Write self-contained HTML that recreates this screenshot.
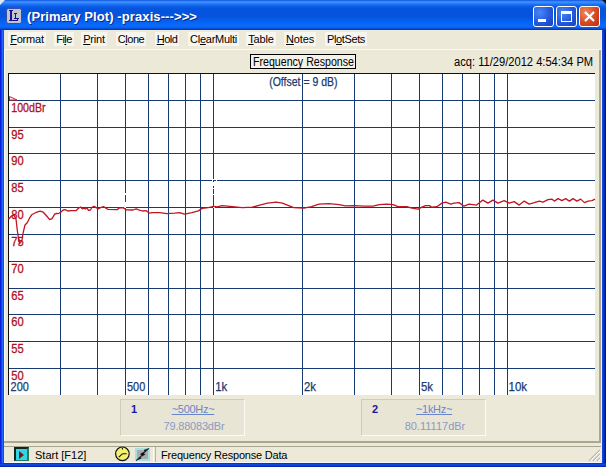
<!DOCTYPE html>
<html><head><meta charset="utf-8"><title>(Primary Plot) -praxis---&gt;&gt;&gt;</title>
<style>
html,body{margin:0;padding:0;}
body{width:606px;height:467px;overflow:hidden;position:relative;background:#ece9d8;font-family:"Liberation Sans",sans-serif;}
.abs{position:absolute;}
#frame{left:0;top:0;width:606px;height:467px;background:linear-gradient(to right,#0a20d8 0,#0a20d8 1px,#1040e8 1px,#1040e8 2px,#2068ff 2px,#2068ff 3px,#1050d0 3px,#1050d0 4px,#0a50e4 4px,#0a50e4 602px,#1446dc 602px,#1446dc 603px,#0838e0 603px,#0838e0 604px,#0828b8 604px,#0828b8 605px,#001890 605px);}
#fbot{left:0;top:463px;width:606px;height:4px;background:linear-gradient(to bottom,#0c34c4 0,#0c34c4 1px,#1048e0 1px,#1048e0 2px,#0c3cd0 2px,#0c3cd0 3px,#0828b8 3px);}
#client{left:4px;top:30px;width:598px;height:433px;background:#ece9d8;}
#title{left:0;top:0;width:606px;height:30px;background:linear-gradient(to bottom,#0a4fd4 0%,#2f85ff 4%,#3a8cff 8%,#1f74f4 14%,#0a5ce6 22%,#0454de 30%,#0454de 55%,#0660f0 70%,#086afc 84%,#0868f8 90%,#0850d8 95%,#0838b4 98%,#0838b0 100%);}
#ttext{left:27px;top:9px;color:#fff;font-weight:bold;font-size:13px;line-height:16px;white-space:nowrap;letter-spacing:0.1px;text-shadow:1px 1px 0 #0a2a90;}
.mi{top:32px;height:14px;background:#f6f5ef;font-size:11px;line-height:14px;color:#000;white-space:nowrap;text-align:center;}
.mi u{text-decoration:underline;}
.tb{top:6px;width:21px;height:21px;border-radius:3px;box-sizing:border-box;border:1px solid #fff;}
.blue{background:radial-gradient(circle at 30% 30%,#4a86f4 0%,#2458dc 55%,#1a3fb8 100%);}
.red{background:radial-gradient(circle at 30% 30%,#f08a60 0%,#d84820 55%,#b83010 100%);}
.plot{position:absolute;left:0;top:0;}
.plot text{font-family:"Liberation Sans",sans-serif;font-size:12px;}
.db{fill:#b01020;stroke:#b01020;stroke-width:0.3px;}
.hz{fill:#183a70;stroke:#183a70;stroke-width:0.25px;}
#fr{left:250px;top:54px;width:106px;height:15px;box-sizing:border-box;border:1px solid #000;background:#f3f1e8;font-size:11px;line-height:13px;letter-spacing:-0.25px;text-align:center;color:#000;white-space:nowrap;}
#acq{left:440px;top:55px;width:153px;text-align:right;font-size:11px;line-height:14px;color:#000;white-space:nowrap;}
.mk{top:399px;width:125px;height:37px;box-sizing:border-box;border:1px solid;border-color:#cfccbd #fbfaf5 #fbfaf5 #cfccbd;background:#e9e5d4;}
.mk b{position:absolute;left:10px;top:3px;font-size:11px;line-height:12px;color:#1a1a9c;}
.mk .f{letter-spacing:-0.3px;position:absolute;left:22px;width:100px;top:3px;text-align:center;font-size:11px;line-height:13px;color:#6a86c8;text-decoration:underline;white-space:nowrap;}
.mk .v{position:absolute;left:23px;width:100px;top:20px;text-align:center;font-size:11px;line-height:13px;color:#8a9ac4;white-space:nowrap;letter-spacing:-0.2px;}
.sx{font-size:12px;line-height:14px;color:#000;white-space:nowrap;transform-origin:0 0;}
.st{font-size:11px;line-height:13px;color:#000;white-space:nowrap;}
</style></head><body>
<div id="frame" class="abs"></div>
<div id="fbot" class="abs"></div>
<div id="title" class="abs"></div>
<div class="abs" style="left:0;top:0;width:0;height:0;border-top:5px solid #dfe6f4;border-right:5px solid transparent;"></div>
<div class="abs" style="right:0;top:0;width:0;height:0;border-top:4px solid #101010;border-left:4px solid transparent;"></div>
<svg class="abs" style="left:6px;top:8px" width="16" height="16" viewBox="0 0 16 16"><rect x="0.5" y="0.5" width="15" height="15" rx="2" fill="#c4c4d0" stroke="#3a4aa8"/><path d="M3 2h4v1h-1v9h5v-2h1v3h-9v-1h1v-9h-1z" fill="#14148c"/><path d="M8 5h3v1h-1v4h3v1h-5v-1h1v-4h-1z" fill="#14148c"/></svg>
<div id="ttext" class="abs">(Primary Plot) -praxis---&gt;&gt;&gt;</div>
<div class="abs tb blue" style="left:533px"><div class="abs" style="left:4px;top:12px;width:8px;height:3px;background:#fff"></div></div>
<div class="abs tb blue" style="left:556px"><div class="abs" style="left:4px;top:4px;width:11px;height:11px;box-sizing:border-box;border:1px solid #fff;border-top-width:3px"></div></div>
<div class="abs tb red" style="left:579px"><svg class="abs" style="left:0;top:0" width="19" height="19" viewBox="0 0 19 19"><path d="M5 5l9 9M14 5l-9 9" stroke="#fff" stroke-width="2.2" fill="none"/></svg></div>
<div id="client" class="abs"></div>
<div class="abs" style="left:4px;top:49px;width:598px;height:1px;background:#fbfaf6"></div>
<div class="abs" style="left:601px;top:30px;width:1px;height:433px;background:#e8eefc"></div>
<div class="abs" style="left:4px;top:50px;width:1px;height:391px;background:#fbfaf6"></div>
<div class="abs mi" style="left:8px;width:38px;letter-spacing:-0.2px"><u>F</u>ormat</div>
<div class="abs mi" style="left:54px;width:20px;letter-spacing:-0.6px">Fi<u>l</u>e</div>
<div class="abs mi" style="left:81px;width:26px;letter-spacing:-0.2px"><u>P</u>rint</div>
<div class="abs mi" style="left:116px;width:30px;letter-spacing:-0.5px">C<u>l</u>one</div>
<div class="abs mi" style="left:155px;width:24px;letter-spacing:-0.5px"><u>H</u>old</div>
<div class="abs mi" style="left:188px;width:51px;letter-spacing:-0.27px">Cl<u>e</u>arMulti</div>
<div class="abs mi" style="left:246px;width:30px;letter-spacing:-0.15px"><u>T</u>able</div>
<div class="abs mi" style="left:284px;width:32px;letter-spacing:-0.15px"><u>N</u>otes</div>
<div class="abs mi" style="left:325px;width:42px;letter-spacing:-0.38px">Pl<u>o</u>tSets</div>

<svg class="plot" width="606" height="467" viewBox="0 0 606 467">
<rect x="8" y="73" width="587" height="322" fill="#fff"/>
<rect x="8" y="100" width="587" height="1" fill="#173a74"/>
<rect x="8" y="127" width="587" height="1" fill="#173a74"/>
<rect x="8" y="153" width="587" height="1" fill="#173a74"/>
<rect x="8" y="180" width="587" height="1" fill="#173a74"/>
<rect x="8" y="207" width="587" height="1" fill="#173a74"/>
<rect x="8" y="234" width="587" height="1" fill="#173a74"/>
<rect x="8" y="261" width="587" height="1" fill="#173a74"/>
<rect x="8" y="288" width="587" height="1" fill="#173a74"/>
<rect x="8" y="314" width="587" height="1" fill="#173a74"/>
<rect x="8" y="341" width="587" height="1" fill="#173a74"/>
<rect x="8" y="368" width="587" height="1" fill="#173a74"/>
<rect x="60" y="73" width="1" height="322" fill="#173a74"/>
<rect x="97" y="73" width="1" height="322" fill="#173a74"/>
<rect x="125" y="73" width="1" height="322" fill="#173a74"/>
<rect x="148" y="73" width="1" height="322" fill="#173a74"/>
<rect x="168" y="73" width="1" height="322" fill="#173a74"/>
<rect x="185" y="73" width="1" height="322" fill="#173a74"/>
<rect x="200" y="73" width="1" height="322" fill="#173a74"/>
<rect x="213" y="73" width="1" height="322" fill="#173a74"/>
<rect x="302" y="73" width="1" height="322" fill="#173a74"/>
<rect x="354" y="73" width="1" height="322" fill="#173a74"/>
<rect x="391" y="73" width="1" height="322" fill="#173a74"/>
<rect x="419" y="73" width="1" height="322" fill="#173a74"/>
<rect x="442" y="73" width="1" height="322" fill="#173a74"/>
<rect x="462" y="73" width="1" height="322" fill="#173a74"/>
<rect x="479" y="73" width="1" height="322" fill="#173a74"/>
<rect x="494" y="73" width="1" height="322" fill="#173a74"/>
<rect x="507" y="73" width="1" height="322" fill="#173a74"/>
<rect x="8" y="73" width="587" height="1" fill="#111"/>
<rect x="8" y="73" width="1" height="322" fill="#111"/>
<rect x="212" y="180" width="1" height="1" fill="#fff"/>
<rect x="216" y="180" width="1" height="1" fill="#fff"/>
<rect x="213" y="179" width="1" height="1" fill="#fff"/>
<rect x="213" y="182" width="1" height="4" fill="#fff"/>
<rect x="213" y="188" width="1" height="1" fill="#fff"/>
<rect x="213" y="194" width="1" height="1" fill="#fff"/>
<rect x="213" y="206" width="1" height="2" fill="#fff"/>
<rect x="214" y="207" width="1" height="1" fill="#fff"/>
<rect x="125" y="193" width="1" height="2" fill="#fff"/>
<rect x="125" y="202" width="1" height="6" fill="#fff"/>
<rect x="124" y="207" width="1" height="1" fill="#fff"/>
<polyline points="8.5,219.3 11.5,216.0 13.7,214.8 16.0,219.0 17.2,229.5 18.7,240.0 19.7,243.7 22.0,240.0 23.2,232.5 25.0,225.0 27.2,222.7 29.5,218.2 31.7,214.8 35.5,212.7 40.0,211.2 43.3,212.2 46.7,216.0 49.7,219.7 52.0,218.7 54.7,214.2 56.5,213.3 58.0,213.7 60.7,212.2 63.2,210.0 65.5,209.7 67.7,211.0 71.5,210.7 76.0,210.7 77.9,208.8 80.4,206.9 82.3,208.8 84.2,208.2 85.4,209.0 86.7,207.6 88.5,210.3 90.4,210.0 92.3,207.0 94.2,206.3 96.0,207.6 98.6,208.8 100.5,207.6 103.6,206.6 106.0,208.2 108.0,209.4 117.4,209.7 118.7,208.2 123.0,207.6 126.2,209.8 133.0,210.0 136.2,208.8 138.7,209.8 142.5,211.0 146.3,210.7 149.4,213.2 152.0,212.6 159.5,212.7 167.0,213.7 174.6,213.2 179.6,212.7 184.6,214.2 192.0,212.7 198.4,210.9 202.2,208.4 208.4,207.7 213.5,206.4 217.2,206.9 222.2,205.6 232.3,206.7 242.3,207.7 252.3,207.2 259.8,205.1 267.4,203.1 276.2,202.1 282.4,203.1 288.7,205.6 293.7,207.7 304.0,208.2 311.5,206.7 319.0,204.1 329.0,203.6 339.1,204.6 345.4,205.9 354.2,205.6 364.2,206.1 373.0,206.1 379.2,204.6 386.8,204.1 393.0,204.6 398.0,206.7 406.8,206.7 411.9,208.2 418.1,209.2 421.9,207.2 425.6,205.6 429.4,205.6 431.9,207.2 436.9,206.7 441.9,203.1 445.7,202.1 450.7,204.1 454.0,203.1 459.0,202.6 464.0,206.2 469.0,204.1 476.6,205.1 482.8,200.1 487.9,203.1 492.9,200.1 497.9,203.1 504.2,200.6 509.2,203.1 514.2,201.6 519.2,205.1 524.2,201.1 529.2,204.1 534.3,202.6 539.3,201.1 543.0,202.1 548.0,199.6 551.8,199.1 554.3,201.1 558.1,198.6 561.9,200.6 565.6,198.6 569.4,201.1 573.1,198.6 576.9,201.1 580.7,199.1 584.4,202.6 588.2,201.1 592.0,200.6 595.0,199.1" fill="none" stroke="#c01622" stroke-width="1.3" stroke-linejoin="round"/>
<path d="M9.5 96.5 L17 100 L9.5 100 Z" fill="none" stroke="#c4202c" stroke-width="1"/>
<text x="11.3" y="112" class="db" textLength="34.2" lengthAdjust="spacingAndGlyphs">100dBr</text>
<text x="11.3" y="139" class="db" textLength="12.4" lengthAdjust="spacingAndGlyphs">95</text>
<text x="11.3" y="165" class="db" textLength="12.4" lengthAdjust="spacingAndGlyphs">90</text>
<text x="11.3" y="192" class="db" textLength="12.4" lengthAdjust="spacingAndGlyphs">85</text>
<text x="11.3" y="219" class="db" textLength="12.4" lengthAdjust="spacingAndGlyphs">80</text>
<text x="11.3" y="246" class="db" textLength="12.4" lengthAdjust="spacingAndGlyphs">75</text>
<text x="11.3" y="273" class="db" textLength="12.4" lengthAdjust="spacingAndGlyphs">70</text>
<text x="11.3" y="300" class="db" textLength="12.4" lengthAdjust="spacingAndGlyphs">65</text>
<text x="11.3" y="326" class="db" textLength="12.4" lengthAdjust="spacingAndGlyphs">60</text>
<text x="11.3" y="353" class="db" textLength="12.4" lengthAdjust="spacingAndGlyphs">55</text>
<text x="11.3" y="380" class="db" textLength="12.4" lengthAdjust="spacingAndGlyphs">50</text>
<text x="10.6" y="391" class="hz" textLength="18.2" lengthAdjust="spacingAndGlyphs">200</text>
<text x="127" y="391" class="hz" textLength="18.2" lengthAdjust="spacingAndGlyphs">500</text>
<text x="215.3" y="391" class="hz" textLength="12" lengthAdjust="spacingAndGlyphs">1k</text>
<text x="304" y="391" class="hz" textLength="12" lengthAdjust="spacingAndGlyphs">2k</text>
<text x="421" y="391" class="hz" textLength="12" lengthAdjust="spacingAndGlyphs">5k</text>
<text x="508.6" y="391" class="hz" textLength="18.5" lengthAdjust="spacingAndGlyphs">10k</text>
<text x="269.2" y="85.5" class="hz" textLength="68.3" lengthAdjust="spacingAndGlyphs">(Offset = 9 dB)</text>
</svg>
<div id="fr" class="abs"></div>
<div class="abs sx" style="left:253.3px;top:55px;transform:scaleX(0.885)">Frequency Response</div>
<div class="abs sx" style="left:454.2px;top:55px;transform:scaleX(0.928)">acq: 11/29/2012 4:54:34 PM</div>
<div class="abs mk" style="left:120px"><b>1</b><span class="f">~500Hz~</span><span class="v">79.88083dBr</span></div>
<div class="abs mk" style="left:361px"><b>2</b><span class="f">~1kHz~</span><span class="v" style="letter-spacing:0">80.11117dBr</span></div>
<div class="abs" style="left:4px;top:441px;width:597px;height:2px;background:#aaa792"></div>
<div class="abs" style="left:599px;top:50px;width:2px;height:393px;background:#aaa792"></div>
<div class="abs" style="left:4px;top:446px;width:597px;height:1px;background:#a7a490"></div>
<div class="abs" style="left:4px;top:462px;width:597px;height:1px;background:#f4f8fc"></div>
<div class="abs" style="left:153px;top:447px;width:1px;height:15px;background:#fbfaf6"></div>
<div class="abs" style="left:155px;top:447px;width:1px;height:15px;background:#b5b2a0"></div>
<div class="abs" style="left:14px;top:447px;width:15px;height:14px;box-sizing:border-box;background:#2fd6e6;border:2px solid #10281c;border-right:2px solid #2a7a5a;border-bottom:1px solid #2a7a5a;"><div class="abs" style="left:3px;top:2px;width:0;height:0;border-left:5px solid #7a1418;border-top:4px solid transparent;border-bottom:4px solid transparent"></div></div>
<div class="abs st" style="left:35px;top:449px">Start [F12]</div>
<svg class="abs" style="left:114px;top:446px" width="17" height="16" viewBox="0 0 17 16"><circle cx="8.4" cy="7.8" r="6.8" fill="#f4f070" stroke="#111" stroke-width="1.2"/><path d="M8.4 2v1.6M8.4 7.8h4.2M8.4 7.8l-3.6 3.4" stroke="#111" stroke-width="1.1" fill="none"/></svg>
<svg class="abs" style="left:135px;top:448px" width="15" height="13" viewBox="0 0 15 13"><rect width="15" height="13" fill="#a9dfe0"/><rect x="2" y="2" width="11" height="9" fill="#a8aeb0"/><path d="M14 0.5L9 2.2l1.3 1.1L5.5 6l1.2 1.2L1 12.5l5.2-2.3-1.1-1.1 4.8-2.6-1.2-1.2z" fill="#111" stroke="#111" stroke-width="0.6"/></svg>
<div class="abs st" style="left:161px;top:449px;letter-spacing:-0.2px">Frequency Response Data</div>
<svg class="abs" style="left:588px;top:449px" width="13" height="13" viewBox="0 0 13 13"><path d="M12 1L1 12M12 5L5 12M12 9L9 12" stroke="#b8b5a6" stroke-width="1.4"/><path d="M13 1L2 12M13 5L6 12M13 9L10 12" stroke="#fff" stroke-width="0.8"/></svg>
</body></html>
